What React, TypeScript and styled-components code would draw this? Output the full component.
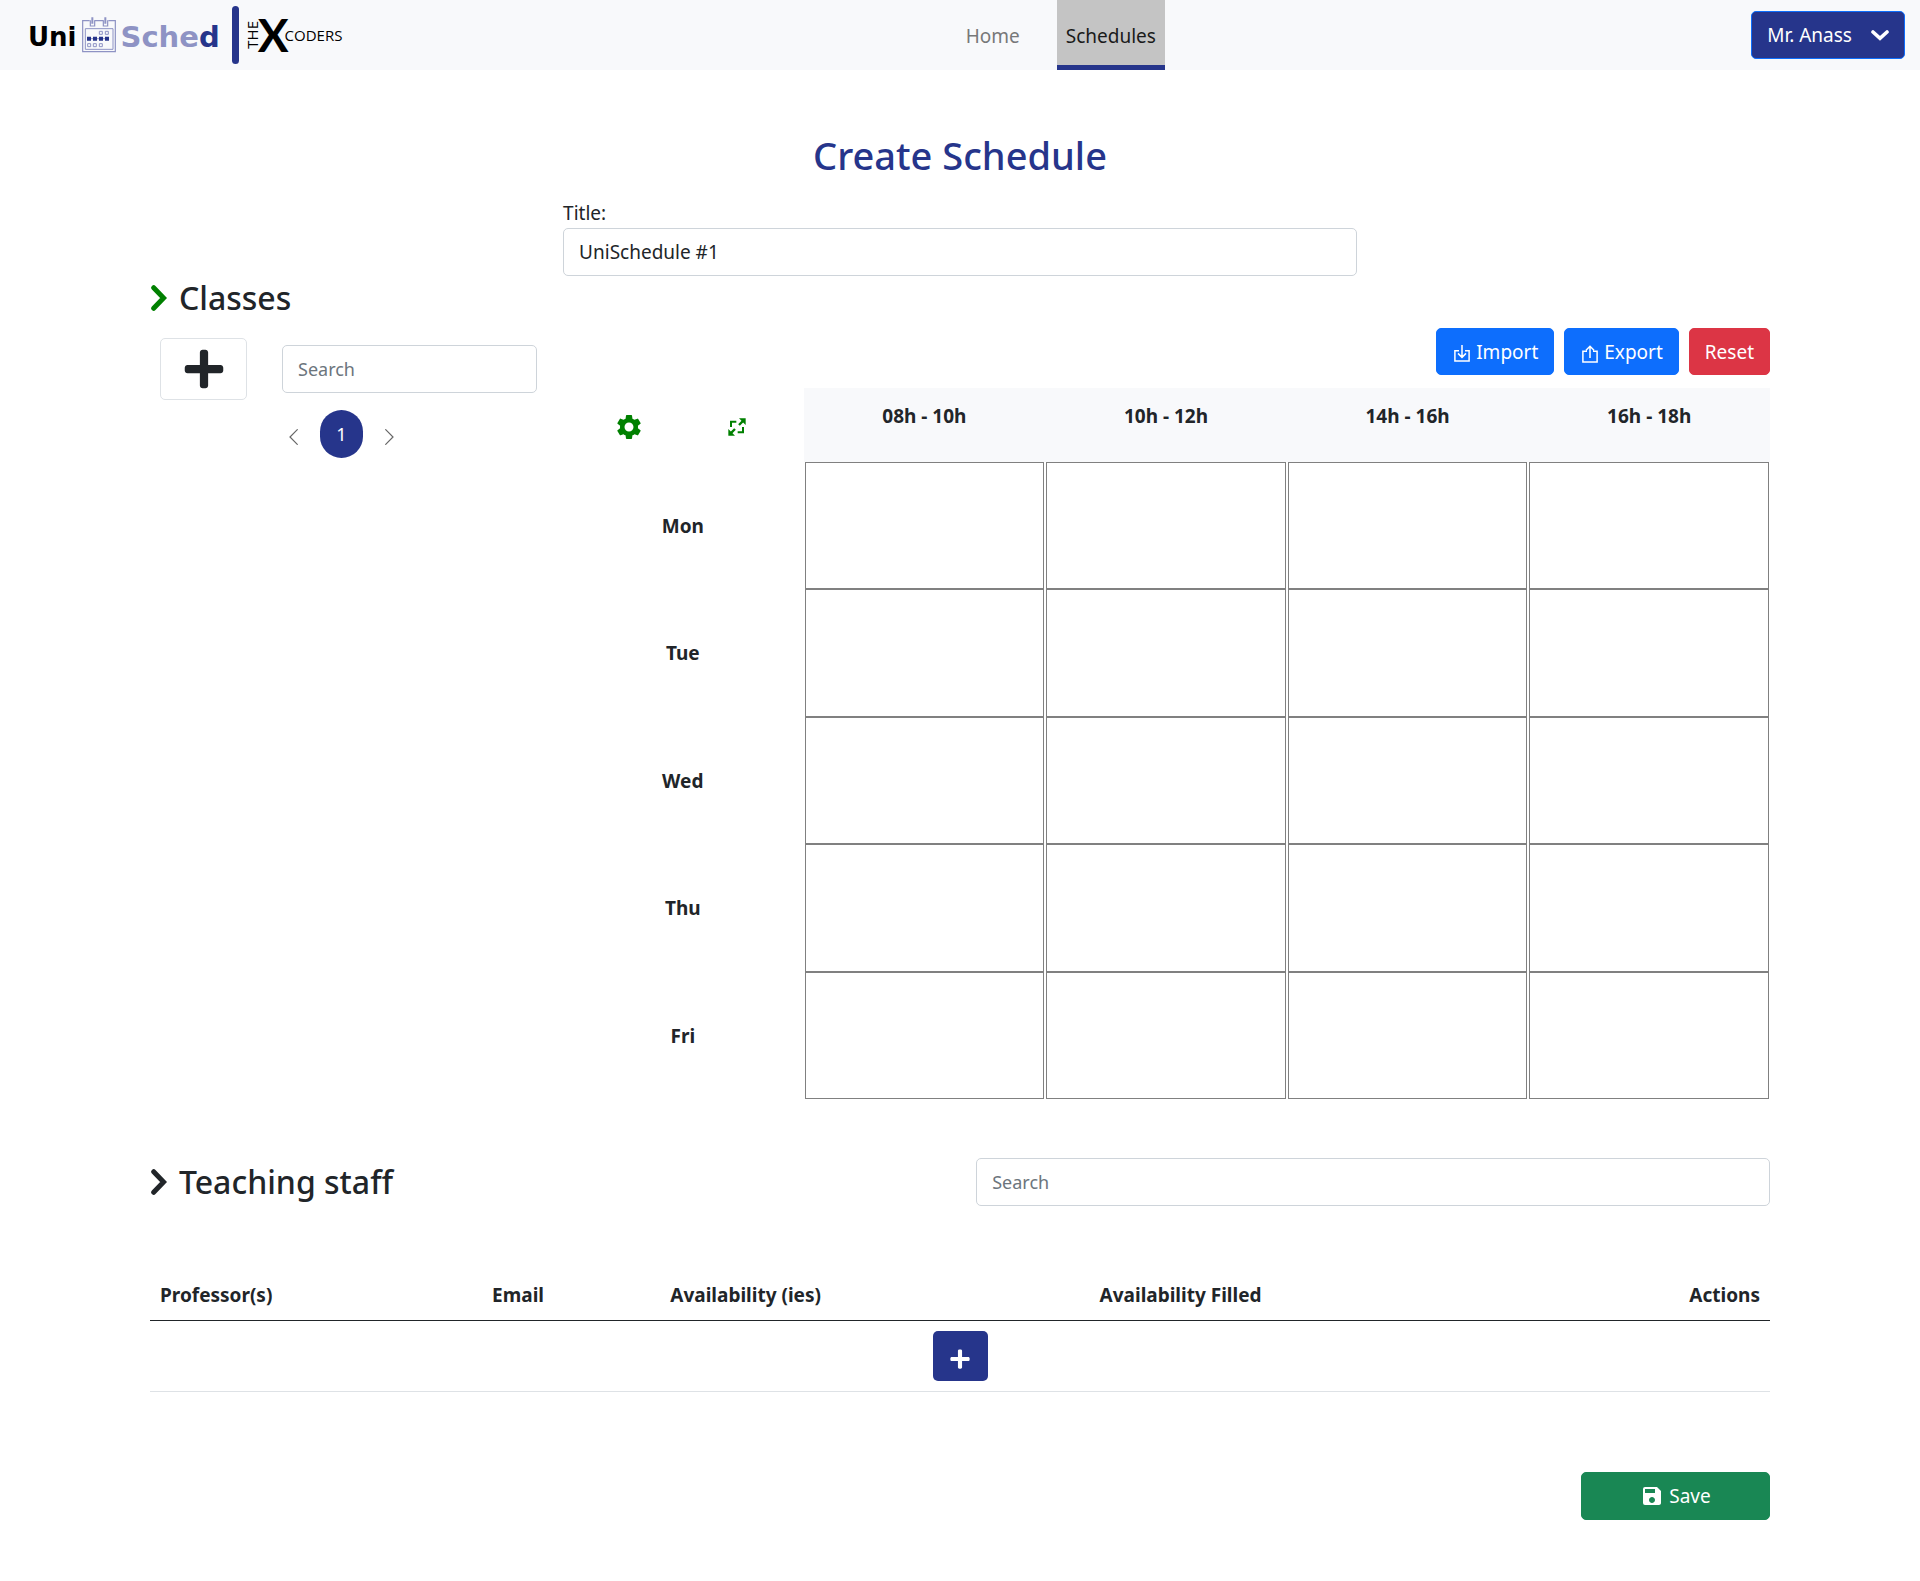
import React, { useState } from "react";
import styled, { createGlobalStyle } from "styled-components";
import { MdSave, MdSettings } from "react-icons/md";
import { FaPlus } from "react-icons/fa";

const navy = "#26358b";
const ink = "#212529";
const line = "#ced4da";

const GlobalStyle = createGlobalStyle`
  *, *::before, *::after { box-sizing: border-box; }
  body {
    margin: 0;
    background: #fff;
    color: ${ink};
    font-family: "Noto Sans", "Open Sans", sans-serif;
    font-size: 19px;
    line-height: 30px;
  }
  button, input { font: inherit; color: inherit; }
  button { cursor: pointer; }
  svg { display: block; flex: none; }
`;

/* ---------- navigation ---------- */

const Navbar = styled.header`
  display: flex;
  justify-content: space-between;
  align-items: stretch;
  min-height: 70px;
  padding: 0 15px 0 28px;
  background: #f8f9fb;
`;

const Brand = styled.a`
  display: flex;
  align-items: center;
  padding-right: 28px;
  color: #000;
  text-decoration: none;
`;

const Wordmark = styled.span`
  display: flex;
  align-items: center;
  gap: 5px;
  padding-right: 12px;
  font: 700 26px/38px "DejaVu Sans", sans-serif;
`;

const WordmarkText = styled.span`
  padding-top: 4px;
`;

const Sched = styled(WordmarkText)`
  color: #8e93c4;
  font-size: 29px;
`;

const SchedEnd = styled.span`
  color: ${navy};
`;

const BrandBar = styled.span`
  width: 7px;
  height: 58px;
  border-radius: 4px;
  background: ${navy};
`;

const Coders = styled.span`
  display: flex;
  align-items: center;
  padding-left: 5px;
  font: 400 15px/16px "Open Sans", sans-serif;
`;

const CodersThe = styled.span`
  writing-mode: vertical-rl;
  transform: rotate(180deg);
`;

const CodersX = styled.span`
  margin: 0 -4px 0 -2px;
  font: 700 46px/46px Lato, sans-serif;
`;

const Tabs = styled.nav`
  display: flex;
  gap: 28px;
`;

const Tab = styled.a<{ $active?: boolean }>`
  display: flex;
  align-items: center;
  padding: 6px 9px 0;
  border-bottom: 5px solid ${(p) => (p.$active ? navy : "transparent")};
  background: ${(p) => (p.$active ? "#c4c4c4" : "transparent")};
  color: ${(p) => (p.$active ? "#1a1a1a" : "#777879")};
  text-decoration: none;
`;

/* ---------- shared controls ---------- */

const Button = styled.button<{ $tone: string; $edge?: string; $wide?: boolean }>`
  display: inline-flex;
  align-items: center;
  justify-content: center;
  gap: 5px;
  height: 48px;
  min-width: ${(p) => (p.$wide ? "189px" : "0")};
  padding: 0 15px;
  border: 1px solid ${(p) => p.$edge ?? p.$tone};
  border-radius: 5px;
  background: ${(p) => p.$tone};
  color: #fff;
`;

const UserButton = styled(Button)`
  align-self: center;
  gap: 19px;
`;

const ToolbarButton = styled(Button)`
  height: 47px;
`;

const TextInput = styled.input`
  display: block;
  width: 100%;
  height: 48px;
  padding: 0 15px;
  border: 1px solid ${line};
  border-radius: 5px;
  background: #fff;
  &::placeholder { color: #6c757d; font-size: 18px; opacity: 1; }
`;

/* ---------- page ---------- */

const Page = styled.main`
  max-width: 1650px;
  margin: 0 auto;
  padding: 61px 15px 60px;
`;

const PageTitle = styled.h1`
  margin: 0 0 19px;
  color: ${navy};
  font-size: 38px;
  font-weight: 500;
  line-height: 48px;
  text-align: center;
`;

const TitleField = styled.div`
  width: 49%;
  margin: 0 auto;
`;

const FieldLabel = styled.label`
  display: block;
`;

const SectionTitle = styled.h2`
  display: flex;
  align-items: center;
  gap: 12px;
  margin: 0;
  font-size: 32px;
  font-weight: 500;
  line-height: 44px;
`;

const Toggle = styled.button<{ $color: string }>`
  padding: 0 0 0 1px;
  border: 0;
  background: none;
  color: ${(p) => p.$color};
`;

const Planner = styled.section`
  display: grid;
  grid-template-columns: 412fr 1208fr;
  align-items: start;
  margin-top: 8px;
`;

const ClassPanel = styled.div`
  display: flex;
  gap: 35px;
  padding: 10px 25px 0 10px;
`;

const AddClass = styled.button`
  display: flex;
  flex: none;
  align-items: center;
  justify-content: center;
  width: 87px;
  height: 62px;
  border: 1px solid #dee2e6;
  border-radius: 5px;
  background: #fff;
  color: ${ink};
`;

const ClassFinder = styled.div`
  flex: 1;
  padding-top: 7px;
`;

const Pager = styled.nav`
  display: flex;
  gap: 22px;
  align-items: center;
  margin-top: 17px;
  padding-left: 7px;
`;

const PagerArrow = styled.button`
  padding: 6px 0 0;
  border: 0;
  background: none;
  color: #666;
`;

const PageNumber = styled.button`
  width: 43px;
  height: 48px;
  padding: 0;
  border: 0;
  border-radius: 22px;
  background: ${navy};
  color: #fff;
  font-size: 18px;
`;

const Actions = styled.div<{ $top?: number }>`
  display: flex;
  justify-content: flex-end;
  gap: 10px;
  margin-top: ${(p) => p.$top ?? 0}px;
`;

const Timetable = styled.table`
  width: 100%;
  margin-top: 13px;
  border-collapse: collapse;
  table-layout: fixed;
  text-align: center;
`;

const ToolCell = styled.td`
  padding: 0;
`;

const Tools = styled.div`
  display: flex;
  justify-content: center;
  align-items: center;
  gap: 84px;
  padding: 4px 6px 0 0;
`;

const ToolButton = styled.button`
  padding: 0;
  border: 0;
  background: none;
  color: green;
`;

const SlotHead = styled.th`
  height: 74px;
  padding: 13px 0 0;
  background: #f8f9fb;
  vertical-align: top;
`;

const DayHead = styled.th`
  padding: 0;
`;

const SlotCell = styled.td`
  padding: 0 1px;
`;

const DayRow = styled.tr`
  height: 127px;
  &:nth-child(even) { height: 128px; }
`;

const Slot = styled.div`
  height: 127px;
  border: 1px solid #808080;
  ${DayRow}:nth-child(even) & { height: 128px; }
`;

const StaffHeader = styled.section`
  display: flex;
  align-items: center;
  justify-content: space-between;
  margin-top: 59px;
`;

const StaffSearch = styled.div`
  width: 49%;
`;

const StaffTable = styled.table`
  width: 100%;
  margin-top: 64px;
  border-collapse: collapse;
  table-layout: fixed;
`;

const StaffHead = styled.th<{ $share: string; $end?: boolean }>`
  width: ${(p) => p.$share};
  padding: 10px;
  border-bottom: 1px solid ${ink};
  text-align: ${(p) => (p.$end ? "right" : "left")};
`;

const StaffAddCell = styled.td`
  padding: 10px;
  border-bottom: 1px solid #dee2e6;
`;

const AddStaff = styled.button`
  display: flex;
  align-items: center;
  justify-content: center;
  width: 55px;
  height: 50px;
  margin: 0 auto;
  padding: 6px 0 0;
  border: 0;
  border-radius: 5px;
  background: ${navy};
  color: #fff;
`;

/* ---------- drawings ---------- */

const SectionChevron = () => (
  <svg width="16" height="26" viewBox="0 0 16 26" fill="none" stroke="currentColor" strokeWidth="5" strokeLinecap="round">
    <path d="M2.7 2.7 12.6 13 2.7 23.3" />
  </svg>
);

const DownChevron = () => (
  <svg width="18" height="11" viewBox="0 0 18 11" fill="none" stroke="currentColor" strokeWidth="3.6" strokeLinecap="round">
    <path d="M2 2 9 8.4 16 2" />
  </svg>
);

const ThinChevron = ({ next }: { next?: boolean }) => (
  <svg width="9" height="16" viewBox="0 0 9 16" fill="none" stroke="currentColor" strokeWidth="1.2" strokeLinecap="round">
    <path d={next ? "M.7.7 8 8 .7 15.3" : "M8.3.7 1 8l7.3 7.3"} />
  </svg>
);

const ExpandIcon = () => (
  <svg width="18" height="18" viewBox="0 0 54 54" fill="none" stroke="currentColor" strokeWidth="6">
    <path d="M9 27V11H25M45 27V43H29" />
    <path d="M33 21 46 8M21 33 8 46" strokeWidth="7" />
    <path d="M33 1H53V21ZM1 33V53H21Z" fill="currentColor" stroke="none" />
  </svg>
);

const ImportIcon = () => (
  <svg width="16" height="17" viewBox="0 0 16 17" fill="none" stroke="currentColor" strokeWidth="1.5">
    <path d="M5 5.7H.9v10.2h14.2V5.7H11M8 0v12.4M4 8.4l4 4 4-4" />
  </svg>
);

const ExportIcon = () => (
  <svg width="16" height="18" viewBox="0 0 16 18" fill="none" stroke="currentColor" strokeWidth="1.5">
    <path d="M5 6.2H.9v10.7h14.2V6.2H11M8 13V1.2M4 5.2l4-4 4 4" />
  </svg>
);

const IconDrop = styled.span`
  padding: 4px 1px 0 2px;
`;

const CalendarIcon = () => (
  <svg width="34" height="36" viewBox="0 0 102 108" fill="none" stroke="#8e93c4" strokeWidth="3.6">
    <path d="M23 11H2V104H100V11H79M38 11H64" />
    <path d="M25 10V27H38V10M64 10V27H77V10" />
    <path d="M31 1V20M70 1V20" strokeWidth="6" />
    <path d="M10 35H93V97H10Z" strokeWidth="3" />
    <path d="M52 43h9v9h-9zM70 43h9v9h-9zM17 80h9v9h-9zM34 80h9v9h-9zM52 80h9v9h-9z" strokeWidth="3" />
    <path d="M15 59h12v12h-12zM33 59h12v12h-12zM51 59h12v12h-12zM69 59h12v12h-12z" fill={navy} stroke="none" />
    <path d="M15 65H81" stroke={navy} strokeWidth="1.5" />
  </svg>
);

/* ---------- app ---------- */

const slots = ["08h - 10h", "10h - 12h", "14h - 16h", "16h - 18h"];
const days = ["Mon", "Tue", "Wed", "Thu", "Fri"];

export default function App() {
  const [title, setTitle] = useState("UniSchedule #1");

  return (
    <>
      <GlobalStyle />
      <Navbar>
        <Brand href="#">
          <Wordmark>
            <WordmarkText>Uni</WordmarkText>
            <CalendarIcon />
            <Sched>
              Sche<SchedEnd>d</SchedEnd>
            </Sched>
          </Wordmark>
          <BrandBar />
          <Coders>
            <CodersThe>THE</CodersThe>
            <CodersX>X</CodersX>
            <span>CODERS</span>
          </Coders>
        </Brand>
        <Tabs>
          <Tab href="#home">Home</Tab>
          <Tab href="#schedules" $active aria-current="page">Schedules</Tab>
        </Tabs>
        <UserButton type="button" $tone={navy} $edge="#0d6efd">
          Mr. Anass
          <DownChevron />
        </UserButton>
      </Navbar>

      <Page>
        <PageTitle>Create Schedule</PageTitle>
        <TitleField>
          <FieldLabel htmlFor="schedule-title">Title:</FieldLabel>
          <TextInput id="schedule-title" value={title} onChange={(e) => setTitle(e.target.value)} />
        </TitleField>

        <SectionTitle>
          <Toggle type="button" $color="green" aria-label="Toggle classes">
            <SectionChevron />
          </Toggle>
          Classes
        </SectionTitle>

        <Planner>
          <ClassPanel>
            <AddClass type="button" aria-label="Add class">
              <FaPlus size={44} />
            </AddClass>
            <ClassFinder>
              <TextInput type="search" placeholder="Search" aria-label="Search classes" />
              <Pager aria-label="Class pages">
                <PagerArrow type="button" aria-label="Previous page"><ThinChevron /></PagerArrow>
                <PageNumber type="button">1</PageNumber>
                <PagerArrow type="button" aria-label="Next page"><ThinChevron next /></PagerArrow>
              </Pager>
            </ClassFinder>
          </ClassPanel>

          <div>
            <Actions>
              <ToolbarButton type="button" $tone="#0d6efd"><IconDrop><ImportIcon /></IconDrop>Import</ToolbarButton>
              <ToolbarButton type="button" $tone="#0d6efd"><IconDrop><ExportIcon /></IconDrop>Export</ToolbarButton>
              <ToolbarButton type="button" $tone="#dc3545">Reset</ToolbarButton>
            </Actions>
            <Timetable>
              <thead>
                <tr>
                  <ToolCell>
                    <Tools>
                      <ToolButton type="button" aria-label="Settings"><MdSettings size={30} /></ToolButton>
                      <ToolButton type="button" aria-label="Expand"><ExpandIcon /></ToolButton>
                    </Tools>
                  </ToolCell>
                  {slots.map((slot) => (
                    <SlotHead key={slot} scope="col">{slot}</SlotHead>
                  ))}
                </tr>
              </thead>
              <tbody>
                {days.map((day) => (
                  <DayRow key={day}>
                    <DayHead scope="row">{day}</DayHead>
                    {slots.map((slot) => (
                      <SlotCell key={slot}><Slot /></SlotCell>
                    ))}
                  </DayRow>
                ))}
              </tbody>
            </Timetable>
          </div>
        </Planner>

        <StaffHeader>
          <SectionTitle>
            <Toggle type="button" $color={ink} aria-label="Toggle teaching staff">
              <SectionChevron />
            </Toggle>
            Teaching staff
          </SectionTitle>
          <StaffSearch>
            <TextInput type="search" placeholder="Search" aria-label="Search teaching staff" />
          </StaffSearch>
        </StaffHeader>

        <StaffTable>
          <thead>
            <tr>
              <StaffHead scope="col" $share="20.5%">Professor(s)</StaffHead>
              <StaffHead scope="col" $share="11%">Email</StaffHead>
              <StaffHead scope="col" $share="26.5%">Availability (ies)</StaffHead>
              <StaffHead scope="col" $share="26%">Availability Filled</StaffHead>
              <StaffHead scope="col" $share="16%" $end>Actions</StaffHead>
            </tr>
          </thead>
          <tbody>
            <tr>
              <StaffAddCell colSpan={5}>
                <AddStaff type="button" aria-label="Add professor">
                  <FaPlus size={22} />
                </AddStaff>
              </StaffAddCell>
            </tr>
          </tbody>
        </StaffTable>

        <Actions $top={80}>
          <Button type="button" $tone="#198754" $wide>
            <MdSave size={24} />
            Save
          </Button>
        </Actions>
      </Page>
    </>
  );
}
